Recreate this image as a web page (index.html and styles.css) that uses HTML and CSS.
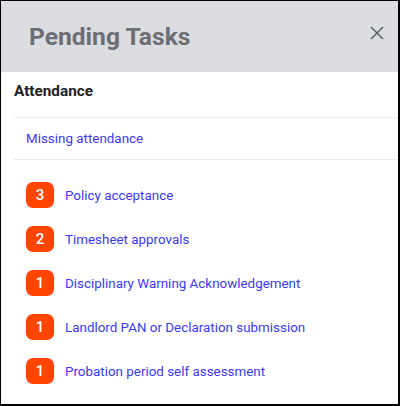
FILE: index.html
```html
<!DOCTYPE html>
<html>
<head>
  <title>Pending Tasks</title>
  <link rel="stylesheet" href="styles.css">
</head>
<body>
  <div class="panel">
    <div class="panel-header">
      <h2>Pending Tasks</h2>
      <button class="close" aria-label="Close">
        <svg width="14" height="14" viewBox="0 0 14 14"><path d="M1 1L13 13M13 1L1 13" stroke="#5f6368" stroke-width="1.6" fill="none"/></svg>
      </button>
    </div>
    <div class="section">
      <h3>Attendance</h3>
      <div class="divider"></div>
      <a class="link single" href="#">Missing attendance</a>
      <div class="divider"></div>
      <ul class="tasks">
        <li><span class="badge">3</span><a class="link" href="#">Policy acceptance</a></li>
        <li><span class="badge">2</span><a class="link" href="#">Timesheet approvals</a></li>
        <li><span class="badge">1</span><a class="link" href="#">Disciplinary Warning Acknowledgement</a></li>
        <li><span class="badge">1</span><a class="link" href="#">Landlord PAN or Declaration submission</a></li>
        <li><span class="badge">1</span><a class="link" href="#">Probation period self assessment</a></li>
      </ul>
    </div>
  </div>
</body>
</html>
```

FILE: styles.css
```css
html, body { margin: 0; padding: 0; }
body { font-family: Roboto, "Liberation Sans", Arial, sans-serif; background: white; }
.panel { width: 400px; height: 406px; box-sizing: border-box; border-left: 1px solid #000; border-top: 1px solid #000; border-right: 2px solid #000; border-bottom: 2px solid #000; background: white; overflow: hidden; }
.panel-header { height: 71px; background: #dcdde1; display: flex; align-items: flex-start; justify-content: space-between; padding: 0 14px 0 28px; }
.panel-header h2 { margin: 21px 0 0; font-size: 24.6px; font-weight: 700; color: #6b6f75; line-height: 30px; }
.close { background: none; border: 0; padding: 0; margin-top: 25px; width: 14px; height: 14px; cursor: pointer; display: block; }
.close svg { display: block; }
.section { padding-left: 13px; }
.section h3 { margin: 0; font-size: 15.3px; font-weight: 700; color: #222; line-height: 18px; padding: 10px 0 17px; }
.divider { height: 1px; background: #ececec; }
.link { color: #3a3af2; text-decoration: none; font-size: 13.4px; }
.single { display: block; line-height: 20px; padding: 11px 12px 10px; }
.tasks { list-style: none; margin: 0; padding: 22px 0 0 12px; }
.tasks li { display: flex; align-items: center; gap: 11px; height: 26px; margin-bottom: 18px; }
.badge { width: 28px; height: 26px; border-radius: 7px; background: #ff4500; color: white; font-size: 15px; font-weight: 500; display: flex; align-items: center; justify-content: center; }
```
